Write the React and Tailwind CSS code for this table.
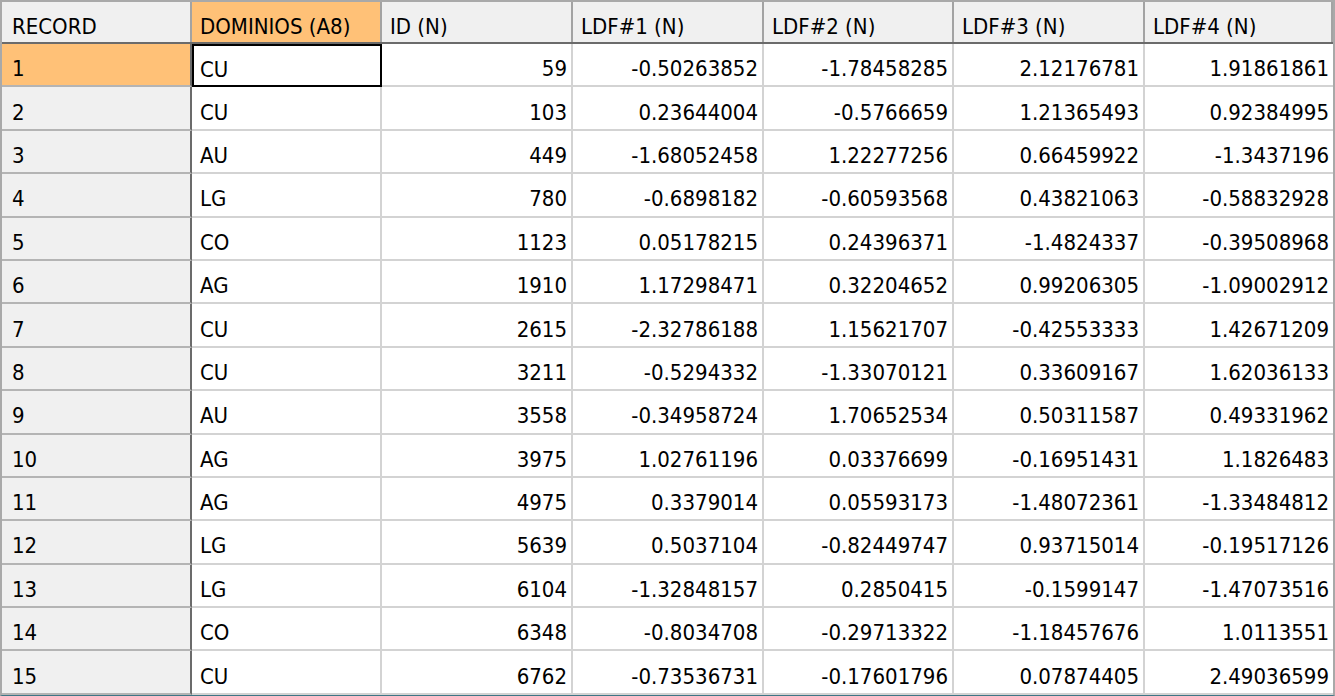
import React from "react";

const rows = [
  [1, "CU", "59", "-0.50263852", "-1.78458285", "2.12176781", "1.91861861"],
  [2, "CU", "103", "0.23644004", "-0.5766659", "1.21365493", "0.92384995"],
  [3, "AU", "449", "-1.68052458", "1.22277256", "0.66459922", "-1.3437196"],
  [4, "LG", "780", "-0.6898182", "-0.60593568", "0.43821063", "-0.58832928"],
  [5, "CO", "1123", "0.05178215", "0.24396371", "-1.4824337", "-0.39508968"],
  [6, "AG", "1910", "1.17298471", "0.32204652", "0.99206305", "-1.09002912"],
  [7, "CU", "2615", "-2.32786188", "1.15621707", "-0.42553333", "1.42671209"],
  [8, "CU", "3211", "-0.5294332", "-1.33070121", "0.33609167", "1.62036133"],
  [9, "AU", "3558", "-0.34958724", "1.70652534", "0.50311587", "0.49331962"],
  [10, "AG", "3975", "1.02761196", "0.03376699", "-0.16951431", "1.1826483"],
  [11, "AG", "4975", "0.3379014", "0.05593173", "-1.48072361", "-1.33484812"],
  [12, "LG", "5639", "0.5037104", "-0.82449747", "0.93715014", "-0.19517126"],
  [13, "LG", "6104", "-1.32848157", "0.2850415", "-0.1599147", "-1.47073516"],
  [14, "CO", "6348", "-0.8034708", "-0.29713322", "-1.18457676", "1.0113551"],
  [15, "CU", "6762", "-0.73536731", "-0.17601796", "0.07874405", "2.49036599"],
];

const headers = ["RECORD", "DOMINIOS (A8)", "ID (N)", "LDF#1 (N)", "LDF#2 (N)", "LDF#3 (N)", "LDF#4 (N)"];

const cols = "grid grid-cols-[190px_190px_191px_191px_190px_191px_1fr]";

export default function App() {
  return (
    <div
      className="w-[1335px] h-[696px] overflow-hidden bg-white border-l-2 border-t-2 border-r-2 border-b border-[#a9a9a9] border-b-[#3f7686] text-black text-[22px] leading-none"
      style={{ fontFamily: '"DejaVu Sans Condensed", "DejaVu Sans", sans-serif' }}
    >
      <div className={`${cols} h-[42px] border-b-2 border-[#6b6b6b]`}>
        {headers.map((h, i) => (
          <div
            key={h}
            className={`flex items-center pt-[9px] border-r-2 border-[#a3a3a3] ${
              i === 1 ? "bg-[#ffc177]" : "bg-[#f0f0f0]"
            } ${i === 0 ? "pl-[10px]" : "pl-[8px]"} ${i === 6 ? "border-r-0" : ""}`}
          >
            <span className="whitespace-nowrap">{h}</span>
          </div>
        ))}
      </div>
      {rows.map((r, ri) => (
        <div key={ri} className={`${cols} h-[43.4px]`}>
          {r.map((c, ci) => {
            if (ci === 0) {
              return (
                <div
                  key={ci}
                  className={`flex items-center pl-[10px] pt-[9px] border-r-2 border-r-[#6b6b6b] border-b-2 border-b-[#b4b4b4] ${
                    ri === 0 ? "bg-[#ffc177]" : "bg-[#f0f0f0]"
                  }`}
                >
                  {c}
                </div>
              );
            }
            if (ci === 1) {
              const sel = ri === 0;
              return (
                <div
                  key={ci}
                  className={`flex items-center pt-[9px] ${
                    sel ? "pl-[6px] border-2 border-black" : "pl-[8px] border-r-2 border-b-2 border-[#d3d3d3]"
                  }`}
                >
                  {c}
                </div>
              );
            }
            return (
              <div
                key={ci}
                className={`flex items-center justify-end pr-[4px] pt-[9px] border-b-2 border-[#d3d3d3] ${
                  ci === 6 ? "" : "border-r-2"
                }`}
              >
                {c}
              </div>
            );
          })}
        </div>
      ))}
    </div>
  );
}
